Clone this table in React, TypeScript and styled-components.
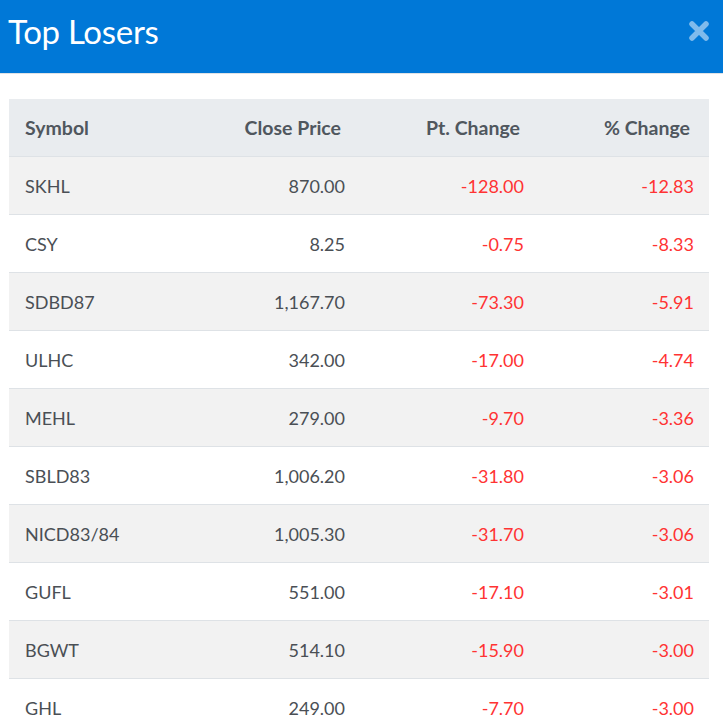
import styled, { createGlobalStyle } from 'styled-components';

interface Loser {
  symbol: string;
  close: string;
  pt: string;
  pct: string;
}

const losers: Loser[] = [
  { symbol: 'SKHL', close: '870.00', pt: '-128.00', pct: '-12.83' },
  { symbol: 'CSY', close: '8.25', pt: '-0.75', pct: '-8.33' },
  { symbol: 'SDBD87', close: '1,167.70', pt: '-73.30', pct: '-5.91' },
  { symbol: 'ULHC', close: '342.00', pt: '-17.00', pct: '-4.74' },
  { symbol: 'MEHL', close: '279.00', pt: '-9.70', pct: '-3.36' },
  { symbol: 'SBLD83', close: '1,006.20', pt: '-31.80', pct: '-3.06' },
  { symbol: 'NICD83/84', close: '1,005.30', pt: '-31.70', pct: '-3.06' },
  { symbol: 'GUFL', close: '551.00', pt: '-17.10', pct: '-3.01' },
  { symbol: 'BGWT', close: '514.10', pt: '-15.90', pct: '-3.00' },
  { symbol: 'GHL', close: '249.00', pt: '-7.70', pct: '-3.00' },
];

const App = () => {
  return (
    <>
      <GlobalStyle />
      <Modal>
        <Header>
          <Title>Top Losers</Title>
          <CloseButton aria-label='close'>
            <svg width='22' height='22' viewBox='0 0 22 22'>
              <path d='M4 4 L18 18 M18 4 L4 18' stroke='currentColor' strokeWidth='5.5' strokeLinecap='round' />
            </svg>
          </CloseButton>
        </Header>
        <Body>
          <Table>
            <colgroup>
              <col style={{ width: 176 }} />
              <col style={{ width: 175 }} />
              <col style={{ width: 179 }} />
              <col style={{ width: 170 }} />
            </colgroup>
            <thead>
              <tr>
                <Th>Symbol</Th>
                <Th $right>Close Price</Th>
                <Th $right>Pt. Change</Th>
                <Th $right>% Change</Th>
              </tr>
            </thead>
            <tbody>
              {losers.map((row, i) => (
                <Row key={row.symbol} $striped={i % 2 === 0}>
                  <Td>{row.symbol}</Td>
                  <Td $right>{row.close}</Td>
                  <Td $right $red>{row.pt}</Td>
                  <Td $right $red>{row.pct}</Td>
                </Row>
              ))}
            </tbody>
          </Table>
        </Body>
      </Modal>
    </>
  );
};

const GlobalStyle = createGlobalStyle`
  body {
    margin: 0;
    background: #ffffff;
    font-family: 'Lato', 'Liberation Sans', sans-serif;
  }
`;

const Modal = styled.div`
  width: 723px;
  background: #ffffff;
`;

const Header = styled.div`
  height: 73px;
  background-color: #0078d7;
  border-bottom: 1px solid #dee2e6;
  display: flex;
  align-items: center;
  justify-content: space-between;
  padding: 0 13px 0 8px;
  box-sizing: content-box;
`;

const Title = styled.h1`
  margin: 0 0 12px;
  color: #ffffff;
  font-size: 33px;
  font-weight: 400;
  letter-spacing: -0.3px;
`;

const CloseButton = styled.button`
  border: none;
  background: none;
  padding: 0;
  color: #80bbec;
  display: flex;
  margin-bottom: 11px;
  cursor: pointer;
`;

const Body = styled.div`
  padding: 25px 14px 0 9px;
`;

const Table = styled.table`
  width: 700px;
  border-collapse: collapse;
  table-layout: fixed;
`;

const Th = styled.th<{ $right?: boolean }>`
  height: 57px;
  background-color: #e9ecef;
  border-bottom: 1px solid #dee2e6;
  color: #50575e;
  font-size: 19.5px;
  font-weight: 700;
  text-align: ${(p) => (p.$right ? 'right' : 'left')};
  padding: 0 ${(p) => (p.$right ? '19px' : '0')} 0 16px;
`;

const Row = styled.tr<{ $striped: boolean }>`
  background-color: ${(p) => (p.$striped ? '#f2f2f2' : '#ffffff')};
`;

const Td = styled.td<{ $right?: boolean; $red?: boolean }>`
  height: 57px;
  border-bottom: 1px solid #dee2e6;
  color: ${(p) => (p.$red ? '#ff3333' : '#4a4f55')};
  font-size: 18px;
  text-align: ${(p) => (p.$right ? 'right' : 'left')};
  padding: 0 ${(p) => (p.$right ? '15px' : '0')} 0 16px;
`;

export default App;
